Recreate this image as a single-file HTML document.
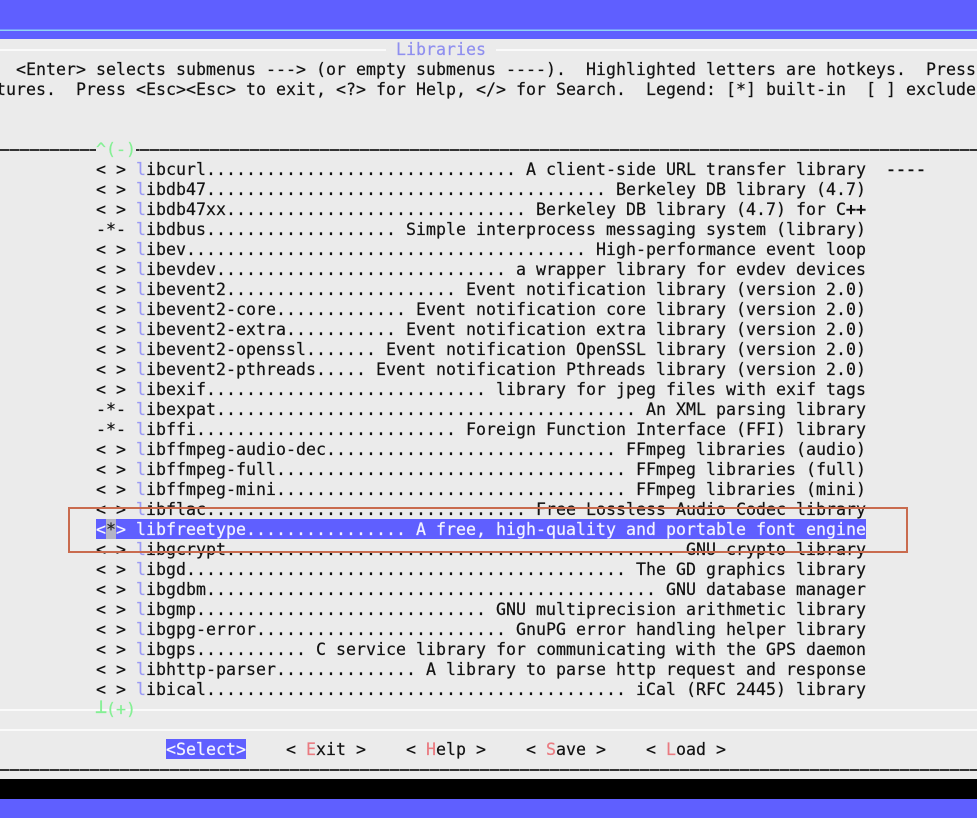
<!DOCTYPE html>
<html><head><meta charset="utf-8">
<style>
html,body{margin:0;padding:0;width:977px;height:818px;overflow:hidden;background:#ebebeb}
body{position:relative;font-family:"DejaVu Sans Mono","Liberation Mono",monospace;font-size:16.61px;color:#111;-webkit-text-stroke:.2px currentColor}
.b{position:absolute;left:0;width:977px}
.t{position:absolute;left:-4px;height:20px;line-height:20px;white-space:pre;margin:1px 0 0 0}
.h{color:#9a9af5}
.r{color:#ea7a80}
.k{-webkit-text-stroke:.6px currentColor}
.d{background:repeating-linear-gradient(90deg,#333 0 9px,#777 9px 10px)}
#sel{position:absolute;left:96px;top:519px;width:770px;height:20px;background:#5f5fff}
#cur{position:absolute;left:106px;top:519px;width:10px;height:20px;background:#b4b4c4}
#btn{position:absolute;left:166px;top:739px;width:80px;height:20px;background:#5f5fff}
#box{position:absolute;left:68px;top:507px;width:836px;height:42px;border:2px solid #c96b4e}
</style></head><body>
<div class="b" style="top:0;height:39px;background:#5f5fff"></div>
<div class="b" style="top:29px;height:1px;background:#7598fa"></div>
<div class="b" style="top:30px;height:1px;background:#8fd0f5"></div>
<div class="b" style="top:49px;height:2px;background:#fafafa"></div>
<div style="position:absolute;left:386px;top:45px;width:110px;height:10px;background:#ebebeb"></div>
<div class="b d" style="top:149px;height:2px"></div>
<div style="position:absolute;left:96px;top:145px;width:40px;height:10px;background:#ebebeb"></div>
<div class="b" style="top:709px;height:2px;background:#fafafa"></div>
<div class="b" style="top:729px;height:2px;background:#fafafa"></div>
<div class="b d" style="top:769px;height:2px"></div>
<div class="b" style="top:779px;height:20px;background:#000"></div>
<div class="b" style="top:799px;height:19px;background:#5f5fff"></div>
<div id="sel"></div><div id="cur"></div><div id="btn"></div>

<pre class="t" style="top:39px;color:#8f8fef">                                        Libraries</pre>
<pre class="t" style="top:59px">  &lt;Enter&gt; selects submenus ---&gt; (or empty submenus ----).  Highlighted letters are hotkeys.  Press</pre>
<pre class="t" style="top:79px">tures.  Press &lt;Esc&gt;&lt;Esc&gt; to exit, &lt;?&gt; for Help, &lt;/&gt; for Search.  Legend: [*] built-in  [ ] exclude</pre>
<pre class="t" style="top:139px;color:#84f094">          ^(-)</pre>

<pre class="t" style="top:159px">          &lt; &gt; <span class="h">l</span>ibcurl............................... A client-side URL transfer library  <span class="k">----</span></pre>
<pre class="t" style="top:179px">          &lt; &gt; <span class="h">l</span>ibdb47........................................ Berkeley DB library (4.7)</pre>
<pre class="t" style="top:199px">          &lt; &gt; <span class="h">l</span>ibdb47xx.............................. Berkeley DB library (4.7) for C<span class="k">++</span></pre>
<pre class="t" style="top:219px">          -*- <span class="h">l</span>ibdbus................... Simple interprocess messaging system (library)</pre>
<pre class="t" style="top:239px">          &lt; &gt; <span class="h">l</span>ibev........................................ High-performance event loop</pre>
<pre class="t" style="top:259px">          &lt; &gt; <span class="h">l</span>ibevdev............................. a wrapper library for evdev devices</pre>
<pre class="t" style="top:279px">          &lt; &gt; <span class="h">l</span>ibevent2....................... Event notification library (version 2.0)</pre>
<pre class="t" style="top:299px">          &lt; &gt; <span class="h">l</span>ibevent2-core............. Event notification core library (version 2.0)</pre>
<pre class="t" style="top:319px">          &lt; &gt; <span class="h">l</span>ibevent2-extra........... Event notification extra library (version 2.0)</pre>
<pre class="t" style="top:339px">          &lt; &gt; <span class="h">l</span>ibevent2-openssl....... Event notification OpenSSL library (version 2.0)</pre>
<pre class="t" style="top:359px">          &lt; &gt; <span class="h">l</span>ibevent2-pthreads..... Event notification Pthreads library (version 2.0)</pre>
<pre class="t" style="top:379px">          &lt; &gt; <span class="h">l</span>ibexif............................ library for jpeg files with exif tags</pre>
<pre class="t" style="top:399px">          -*- <span class="h">l</span>ibexpat.......................................... An XML parsing library</pre>
<pre class="t" style="top:419px">          -*- <span class="h">l</span>ibffi.......................... Foreign Function Interface (FFI) library</pre>
<pre class="t" style="top:439px">          &lt; &gt; <span class="h">l</span>ibffmpeg-audio-dec............................. FFmpeg libraries (audio)</pre>
<pre class="t" style="top:459px">          &lt; &gt; <span class="h">l</span>ibffmpeg-full................................... FFmpeg libraries (full)</pre>
<pre class="t" style="top:479px">          &lt; &gt; <span class="h">l</span>ibffmpeg-mini................................... FFmpeg libraries (mini)</pre>
<pre class="t" style="top:499px">          &lt; &gt; <span class="h">l</span>ibflac................................ Free Lossless Audio Codec library</pre>
<pre class="t" style="top:519px;color:#f4f4ff">          &lt;<span style="color:#222">*</span>&gt; libfreetype................ A free, high-quality and portable font engine</pre>
<pre class="t" style="top:539px">          &lt; &gt; <span class="h">l</span>ibgcrypt............................................. GNU crypto library</pre>
<pre class="t" style="top:559px">          &lt; &gt; <span class="h">l</span>ibgd............................................ The GD graphics library</pre>
<pre class="t" style="top:579px">          &lt; &gt; <span class="h">l</span>ibgdbm............................................. GNU database manager</pre>
<pre class="t" style="top:599px">          &lt; &gt; <span class="h">l</span>ibgmp............................. GNU multiprecision arithmetic library</pre>
<pre class="t" style="top:619px">          &lt; &gt; <span class="h">l</span>ibgpg-error......................... GnuPG error handling helper library</pre>
<pre class="t" style="top:639px">          &lt; &gt; <span class="h">l</span>ibgps........... C service library for communicating with the GPS daemon</pre>
<pre class="t" style="top:659px">          &lt; &gt; <span class="h">l</span>ibhttp-parser.............. A library to parse http request and response</pre>
<pre class="t" style="top:679px">          &lt; &gt; <span class="h">l</span>ibical.......................................... iCal (RFC 2445) library</pre>
<pre class="t" style="top:699px;color:#84f094">          <span style="display:inline-block;width:10px;position:relative;top:-2px;font-size:20px;line-height:14px;text-indent:-1px">⊥</span>(+)</pre>
<pre class="t" style="top:739px">                 <span style="color:#f4f4ff">&lt;Select&gt;</span>    &lt; <span class="r">E</span>xit &gt;    &lt; <span class="r">H</span>elp &gt;    &lt; <span class="r">S</span>ave &gt;    &lt; <span class="r">L</span>oad &gt;</pre>
<div id="box"></div>
</body></html>
